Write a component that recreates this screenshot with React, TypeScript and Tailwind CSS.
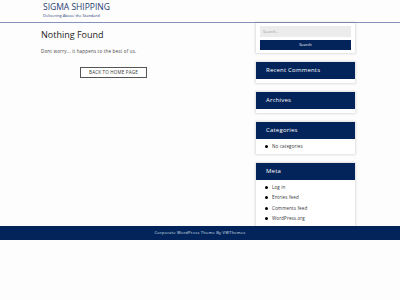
const navy = "bg-[#03245a]";

function Widget({ title, children }: { title: string; children?: React.ReactNode }) {
  return (
    <div className="bg-white shadow-[0_0_2px_1px_rgba(0,0,0,0.12)]">
      <div className={`${navy} h-[17px] flex items-center pl-[10px] text-[6px] tracking-[0.2px] text-white`}>{title}</div>
      <div className="min-h-[4px]">{children}</div>
    </div>
  );
}

function Item({ label }: { label: string }) {
  return (
    <li className="flex items-center h-[10.3px] text-[4.5px] tracking-[0.15px] text-[#333]">
      <span className="w-[3px] h-[3px] rounded-full bg-black ml-[9px] mr-[4px]" />
      {label}
    </li>
  );
}

export default function App() {
  return (
    <div className="w-[400px] h-[300px] bg-[#fdfdfd] font-['Open_Sans',sans-serif] overflow-hidden">
      <header className="border-b border-[#8593ba] h-[23px] pl-[43px] pt-[1px]">
        <div className="text-[8.5px] leading-[12px] text-[#1f3b73]">SIGMA SHIPPING</div>
        <div className="text-[4px] leading-[6px] text-[#1f3b73]">Delivering Above the Standard</div>
      </header>
      <div className="flex pl-[41px] h-[203px]">
        <main className="w-[215px]">
          <h1 className="text-[9px] leading-[14px] mt-[5px] text-[#222]">Nothing Found</h1>
          <p className="text-[4.5px] leading-[8px] mt-[5px] text-[#444] tracking-[0.2px]">Dont worry... it happens to the best of us.</p>
          <div className="mt-[12px] ml-[39px] w-[67px] h-[11px] border border-[#555] flex items-center justify-center text-[4.5px] tracking-[0.2px] text-[#333] bg-white">
            BACK TO HOME PAGE
          </div>
        </main>
        <aside className="w-[99px] flex flex-col gap-[9px]">
          <div className="bg-white shadow-[0_0_2px_1px_rgba(0,0,0,0.12)] px-[4px] pt-[3px] pb-[3px]">
            <div className="h-[11px] bg-[#ececec] text-[4px] text-[#999] flex items-center pl-[3px]">Search...</div>
            <div className={`${navy} mt-[3px] h-[10px] text-[4px] text-white flex items-center justify-center`}>Search</div>
          </div>
          <Widget title="Recent Comments" />
          <Widget title="Archives" />
          <Widget title="Categories">
            <ul className="pt-[2px] pb-[3px]">
              <Item label="No categories" />
            </ul>
          </Widget>
          <Widget title="Meta">
            <ul className="pt-[2px] pb-[3px]">
              <Item label="Log in" />
              <Item label="Entries feed" />
              <Item label="Comments feed" />
              <Item label="WordPress.org" />
            </ul>
          </Widget>
        </aside>
      </div>
      <footer className={`${navy} h-[14px] flex items-center justify-center text-[4px] tracking-[0.25px] text-[#dde3ee]`}>
        Corporate WordPress Theme By VWThemes
      </footer>
    </div>
  );
}
